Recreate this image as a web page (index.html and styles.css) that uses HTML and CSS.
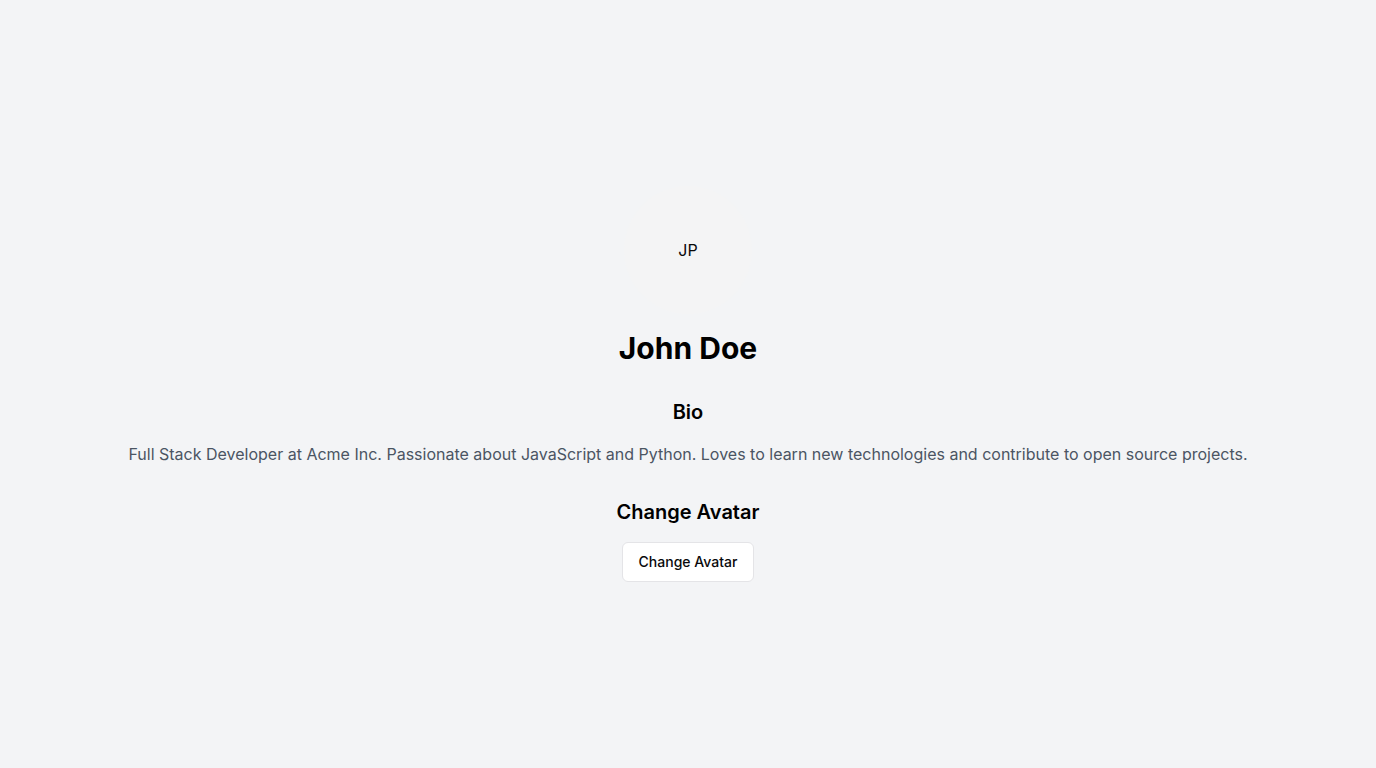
FILE: index.html
```html
<!DOCTYPE html>
<html lang="en">
<head>
<meta charset="utf-8">
<title>Profile</title>
<link rel="stylesheet" href="styles.css">
</head>
<body>
<main class="page">
  <div class="profile">
    <div class="avatar"><span>JP</span></div>
    <h1 class="name">John Doe</h1>
    <h2 class="section-title">Bio</h2>
    <p class="bio">Full Stack Developer at Acme Inc. Passionate about JavaScript and Python. Loves to learn new technologies and contribute to open source projects.</p>
    <h2 class="section-title">Change Avatar</h2>
    <button class="btn" type="button">Change Avatar</button>
  </div>
</main>
</body>
</html>
```

FILE: styles.css
```css
* { box-sizing: border-box; }
html, body { margin: 0; padding: 0; }
body {
  background: #f3f4f6;
  font-family: Inter, "Noto Sans", sans-serif;
  color: #000;
}
.page {
  min-height: 100vh;
  display: flex;
  align-items: center;
  justify-content: center;
}
.profile {
  display: flex;
  flex-direction: column;
  align-items: center;
  text-align: center;
}
.avatar {
  width: 128px;
  height: 128px;
  border-radius: 50%;
  background: #f4f4f5;
  display: flex;
  align-items: center;
  justify-content: center;
  font-size: 16px;
  line-height: 24px;
  color: #09090b;
  margin-bottom: 16px;
}
.name {
  margin: 0 0 32px;
  font-size: 30px;
  line-height: 36px;
  font-weight: 700;
}
.section-title {
  margin: 0 0 16px;
  font-size: 20px;
  line-height: 28px;
  font-weight: 600;
}
.bio {
  margin: 0 0 32px;
  font-size: 16px;
  line-height: 24px;
  color: #4b5563;
}
.btn {
  font-family: inherit;
  font-size: 14px;
  font-weight: 500;
  line-height: 20px;
  height: 40px;
  padding: 8px 16px;
  background: #fff;
  color: #09090b;
  border: 1px solid #e4e4e7;
  border-radius: 6px;
  cursor: pointer;
}
```
